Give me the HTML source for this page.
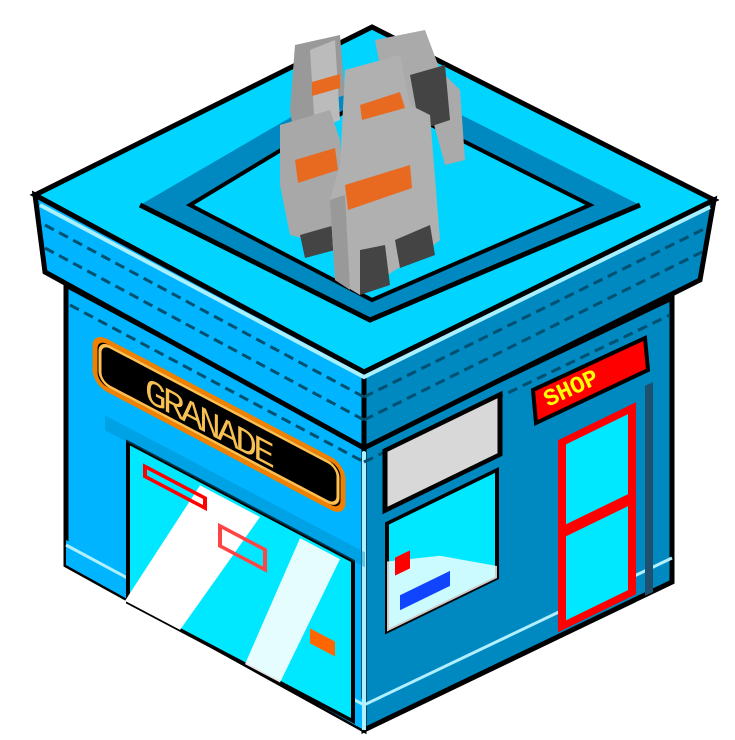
<!DOCTYPE html>
<html><head><style>html,body{margin:0;padding:0;background:#fff;width:735px;height:740px;overflow:hidden}</style></head>
<body>
<svg width="735" height="740" viewBox="0 0 735 740" xmlns="http://www.w3.org/2000/svg">
<!-- body walls -->
<polygon points="66,285 364,445 364,730 66,565" fill="#00b4ff" stroke="#000" stroke-width="5"/>
<polygon points="364,445 672,298 672,582 364,730" fill="#0088c0" stroke="#000" stroke-width="5"/>
<polygon points="66,540 364,700 364,730 66,565" fill="#00b4ff"/>
<polyline points="66,545 364,705 672,558" fill="none" stroke="#b0f0ff" stroke-width="3"/>
<line x1="364" y1="445" x2="364" y2="730" stroke="#b0f0ff" stroke-width="4"/>
<!-- slab -->
<polygon points="35,195 364,372 364,448 45,272" fill="#00b4ff" stroke="#000" stroke-width="5"/>
<polygon points="364,372 714,200 700,280 364,448" fill="#0088c0" stroke="#000" stroke-width="5"/>
<g stroke="#005070" stroke-width="3" stroke-dasharray="10 6" fill="none">
<line x1="45" y1="225" x2="364" y2="397"/><line x1="45" y1="248" x2="364" y2="420"/>
<line x1="364" y1="397" x2="706" y2="228"/><line x1="364" y1="420" x2="702" y2="252"/>
<line x1="70" y1="305" x2="364" y2="462"/><line x1="364" y1="462" x2="670" y2="315"/>
</g>
<!-- top face -->
<polygon points="372,27 714,200 364,372 35,195" fill="#00d4ff" stroke="#000" stroke-width="5"/>
<polyline points="40,205 364,377 710,207" fill="none" stroke="#a8f0ff" stroke-width="4"/>
<polygon points="372,70 640,205 370,320 140,205" fill="#0088c0"/>
<polygon points="372,95 590,205 372,300 190,205" fill="#00d4ff" stroke="#000" stroke-width="4"/>
<polyline points="140,205 370,320 640,205" fill="none" stroke="#000" stroke-width="5"/>
<!-- grenades -->
<g>
<polygon points="295,45 340,35 345,95 330,100 330,170 300,175 290,110" fill="#999"/>
<polygon points="310,50 335,40 340,120 315,130" fill="#bbb"/>
<polygon points="312,82 340,74 340,88 312,96" fill="#e86a20"/>
<polygon points="375,40 425,30 440,70 460,90 465,160 445,165 430,110 390,120" fill="#aaa"/>
<polygon points="410,75 445,65 450,120 420,130" fill="#444"/>
<polygon points="280,125 330,110 340,140 345,230 310,240 290,235 280,185" fill="#a8a8a8"/>
<polygon points="295,160 335,148 338,170 298,183" fill="#e86a20"/>
<polygon points="300,235 335,225 335,250 305,258" fill="#444"/>
<polygon points="345,70 400,55 410,105 430,115 440,240 415,260 395,270 360,295 335,280 330,200 340,165" fill="#b0b0b0"/>
<polygon points="345,185 410,165 412,188 348,210" fill="#e86a20"/>
<polygon points="360,105 400,92 405,108 362,120" fill="#e86a20"/>
<polygon points="360,250 385,245 390,285 360,295" fill="#444"/>
<polygon points="395,240 430,225 435,255 400,268" fill="#444"/>
<polygon points="330,200 345,195 350,290 335,280" fill="#999"/>
</g>
<!-- left sign & window -->
<g transform="matrix(1,0.527,0,1,0,0)">
<rect x="95" y="285" width="248" height="48" rx="12" fill="#000" stroke="#f08000" stroke-width="5"/>
<rect x="100" y="289" width="238" height="40" rx="10" fill="none" stroke="#ffc050" stroke-width="3"/>
<text x="145" y="324" font-family="Liberation Mono, monospace" font-size="36" fill="#f8c050" textLength="130">GRANADE</text>
<rect x="128" y="375" width="225" height="160" fill="#00e8ff" stroke="#000" stroke-width="4"/>
<rect x="105" y="360" width="260" height="15" fill="#0088c0" opacity="0.4"/>
<polygon points="200,380 260,380 180,535 125,535" fill="#fff"/>
<polygon points="300,380 340,380 280,535 245,535" fill="#fff" opacity="0.9"/>
<rect x="145" y="390" width="60" height="10" fill="none" stroke="#f00" stroke-width="4"/>
<rect x="220" y="410" width="45" height="20" fill="none" stroke="#f44" stroke-width="4"/>
<rect x="310" y="465" width="25" height="15" fill="#f60"/>
</g>
<!-- right face -->
<g transform="matrix(1,-0.487,0,1,0,0)">
<rect x="385" y="638" width="115" height="60" fill="#d8d8d8" stroke="#000" stroke-width="5"/>
<rect x="387" y="712" width="110" height="108" fill="#00e8ff" stroke="#000" stroke-width="4"/>
<polygon points="387,750 440,770 497,808 497,820 387,820" fill="#fff" opacity="0.8"/>
<rect x="395" y="750" width="15" height="18" fill="#f00"/>
<rect x="400" y="790" width="50" height="15" fill="#14f"/>
<rect x="562" y="716" width="70" height="184" fill="#00e8ff" stroke="#f00" stroke-width="8"/>
<rect x="562" y="800" width="70" height="12" fill="#f00"/>
<rect x="645" y="700" width="8" height="210" fill="#1e5070"/>
</g>
<polygon points="533,390 645,338 648,370 536,423" fill="#f00" stroke="#000" stroke-width="4"/>
<text x="0" y="0" font-family="Liberation Mono, monospace" font-size="24" font-weight="bold" fill="#ff0" transform="translate(548,407) rotate(-25)">SHOP</text>
</svg>
</body></html>
